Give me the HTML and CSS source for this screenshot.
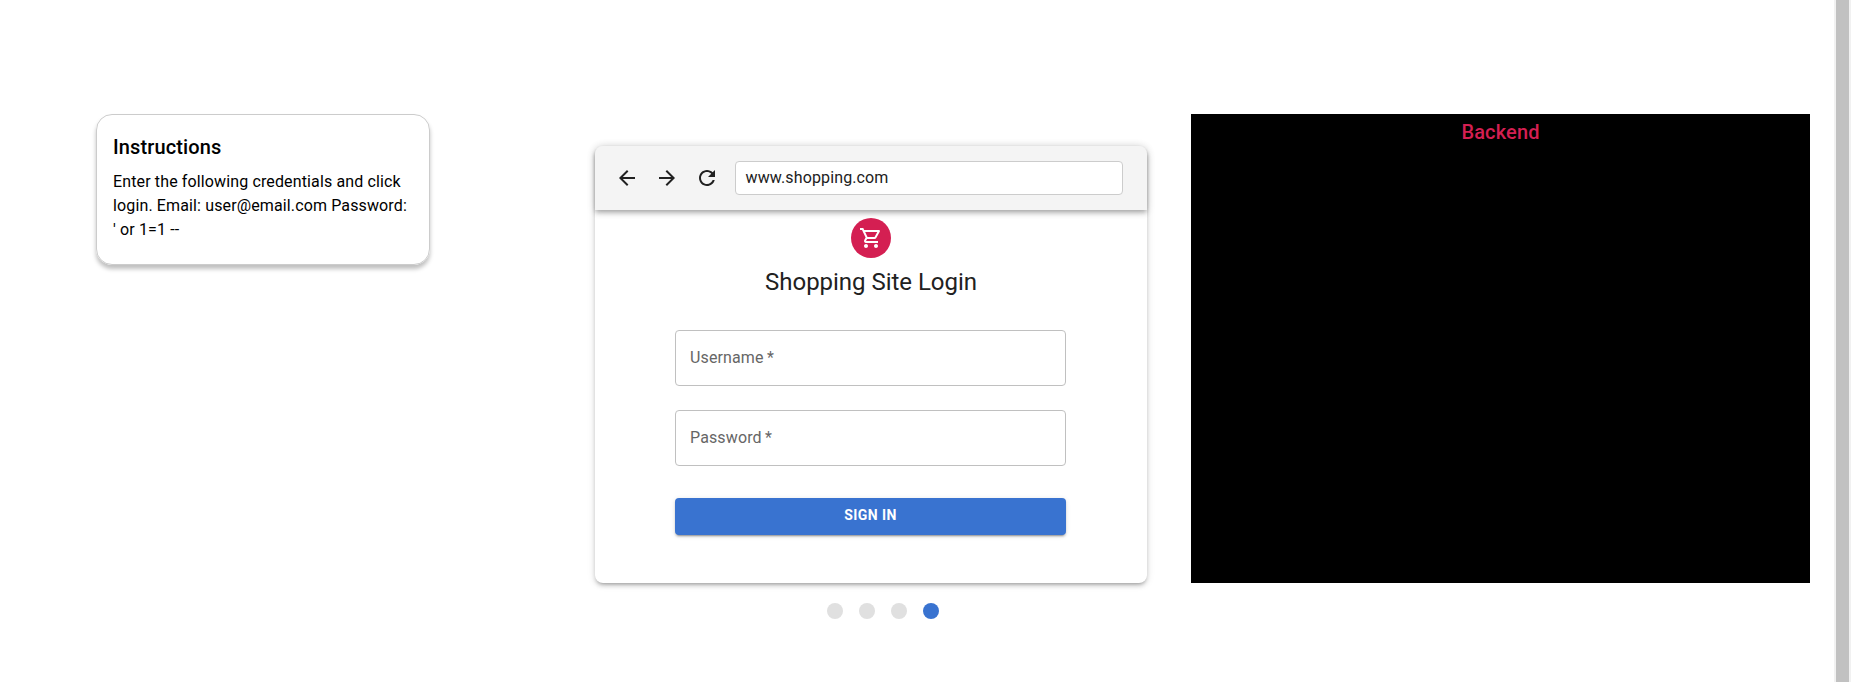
FILE: index.html
```html
<!DOCTYPE html>
<html lang="en">
<head>
<meta charset="utf-8">
<title>Shopping Site Login</title>
<link rel="stylesheet" href="styles.css">
</head>
<body>
<div class="page">
  <main class="columns">
    <section class="instructions">
      <h6 class="instructions-title">Instructions</h6>
      <p class="instructions-text">Enter the following credentials and click login. Email: user@email.com Password: ' or 1=1 --</p>
    </section>
    <section class="stage">
      <div class="browser">
        <header class="toolbar">
          <svg class="icon" viewBox="0 0 24 24"><path d="M20 11H7.83l5.59-5.59L12 4l-8 8 8 8 1.41-1.41L7.83 13H20v-2z"/></svg>
          <svg class="icon" viewBox="0 0 24 24"><path d="M12 4l-1.41 1.41L16.17 11H4v2h12.17l-5.58 5.59L12 20l8-8z"/></svg>
          <svg class="icon" viewBox="0 0 24 24"><path d="M17.65 6.35C16.2 4.9 14.21 4 12 4c-4.42 0-7.99 3.58-7.99 8s3.57 8 7.99 8c3.73 0 6.84-2.55 7.73-6h-2.08c-.82 2.33-3.04 4-5.65 4-3.31 0-6-2.69-6-6s2.69-6 6-6c1.66 0 3.14.69 4.22 1.78L13 11h7V4l-2.35 2.35z"/></svg>
          <div class="address">www.shopping.com</div>
        </header>
        <div class="login">
          <div class="avatar">
            <svg class="icon" viewBox="0 0 24 24"><path d="M15.55 13c.75 0 1.41-.41 1.75-1.03l3.58-6.49c.37-.66-.11-1.48-.87-1.48H5.21l-.94-2H1v2h2l3.6 7.59-1.35 2.44C4.52 15.37 5.48 17 7 17h12v-2H7l1.1-2h7.45zM6.16 6h12.15l-2.76 5H8.53L6.16 6zM7 18c-1.1 0-1.99.9-1.99 2S5.9 22 7 22s2-.9 2-2-.9-2-2-2zm10 0c-1.1 0-1.99.9-1.99 2s.89 2 1.99 2 2-.9 2-2-.9-2-2-2z"/></svg>
          </div>
          <h5 class="login-title">Shopping Site Login</h5>
          <form class="form">
            <div class="field">Username&thinsp;*</div>
            <div class="field">Password&thinsp;*</div>
            <button class="submit" type="button">Sign In</button>
          </form>
        </div>
      </div>
      <div class="dots">
        <span class="dot"></span><span class="dot"></span><span class="dot"></span><span class="dot dot-active"></span>
      </div>
    </section>
    <section class="backend"><h6 class="backend-title">Backend</h6></section>
  </main>
  <aside class="scrollbar"><div class="scroll-thumb"></div></aside>
</div>
</body>
</html>
```
FILE: styles.css
```css
* { box-sizing: border-box; }

body {
  margin: 0;
  overflow: hidden;
  background: #fff;
  font-family: Roboto, "Liberation Sans", sans-serif;
  font-size: 16px;
  line-height: 24px;
  letter-spacing: 0.13px;
  color: #000;
}

h5, h6, p { margin: 0; }

.page {
  display: flex;
  height: 682px;
}

.columns {
  flex: 1;
  display: flex;
  align-items: flex-start;
  padding: 114px 24px 0 96px;
}

.instructions {
  width: 334px;
  height: 151px;
  margin-right: 165px;
  padding: 16px;
  border: 1px solid #ccc;
  border-radius: 16px;
  box-shadow: 0 4px 4px rgba(0, 0, 0, 0.25);
}

.instructions-title,
.backend-title {
  font-size: 20px;
  font-weight: 500;
  line-height: 32px;
}

.instructions-text { margin-top: 7px; }

.stage {
  width: 552px;
  margin: 32px 44px 0 0;
}

.browser {
  height: 437px;
  border-radius: 8px;
  box-shadow: 0 3px 3px -2px rgba(0, 0, 0, 0.2), 0 3px 4px rgba(0, 0, 0, 0.14), 0 1px 8px rgba(0, 0, 0, 0.12);
}

.toolbar {
  display: flex;
  align-items: center;
  gap: 16px;
  height: 64px;
  padding: 0 24px 0 20px;
  border-radius: 8px 8px 0 0;
  background: #f4f4f4;
  color: #212121;
  box-shadow: 0 2px 4px -1px rgba(0, 0, 0, 0.2), 0 4px 5px rgba(0, 0, 0, 0.14), 0 1px 10px rgba(0, 0, 0, 0.12);
}

.icon {
  width: 24px;
  height: 24px;
  flex: none;
  fill: currentColor;
}

.address {
  flex: 1;
  height: 34px;
  padding: 4px 9.5px;
  border: 1px solid #ccc;
  border-radius: 4px;
  background: #fff;
}

.login {
  display: flex;
  flex-direction: column;
  align-items: center;
  padding: 8px 80px 0;
}

.avatar {
  display: grid;
  place-items: center;
  width: 40px;
  height: 40px;
  border-radius: 50%;
  background: #d41f52;
  color: #fff;
}

.login-title {
  margin-top: 8px;
  font-size: 24px;
  font-weight: 400;
  line-height: 32px;
  letter-spacing: -0.03px;
  color: #212121;
}

.form {
  display: flex;
  flex-direction: column;
  align-self: flex-start;
  gap: 24px;
  width: 391px;
  margin-top: 32px;
}

.field {
  height: 56px;
  padding: 15px 14px;
  border: 1px solid #c0c0c0;
  border-radius: 4px;
  color: #666;
}

.submit {
  height: 37px;
  margin-top: 8px;
  padding: 0 0 3px;
  border: 0;
  border-radius: 4px;
  background: #3973d0;
  color: #fff;
  font: 700 14px/24px Roboto, "Liberation Sans", sans-serif;
  letter-spacing: 0.4px;
  text-transform: uppercase;
  box-shadow: 0 3px 1px -2px rgba(0, 0, 0, 0.2), 0 2px 2px rgba(0, 0, 0, 0.14), 0 1px 5px rgba(0, 0, 0, 0.12);
}

.dots {
  display: flex;
  gap: 16px;
  margin-top: 20px;
  padding-left: 232px;
}

.dot {
  width: 16px;
  height: 16px;
  border-radius: 50%;
  background: #e0e0e0;
}

.dot-active { background: #3973d0; }

.backend {
  flex: 1;
  height: 469px;
  padding-top: 2px;
  background: #000;
  text-align: center;
}

.backend-title { color: #d41f52; }

.scrollbar {
  width: 17px;
  padding: 0 2px;
  background: #f1f1f1;
}

.scroll-thumb {
  height: 100%;
  background: #c1c1c1;
}
```
